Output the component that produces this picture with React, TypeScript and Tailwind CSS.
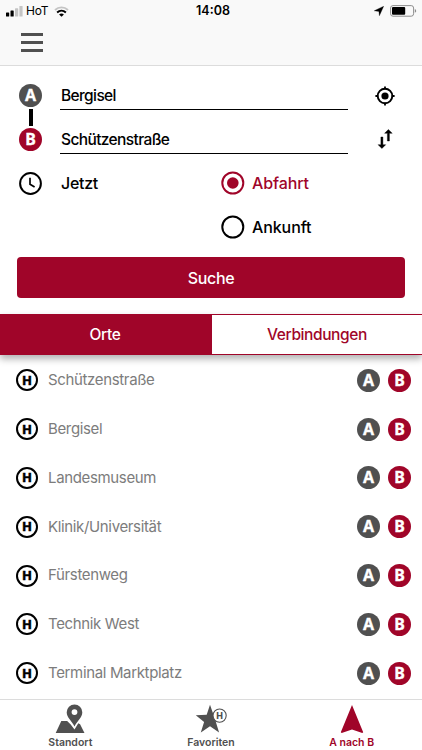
import React, { useState } from 'react';
import clsx from 'clsx';

const stops = [
  'Schützenstraße',
  'Bergisel',
  'Landesmuseum',
  'Klinik/Universität',
  'Fürstenweg',
  'Technik West',
  'Terminal Marktplatz',
];

function Badge({ letter }: { letter: 'A' | 'B' }) {
  return (
    <span
      className={clsx(
        'flex h-[23px] w-[23px] shrink-0 items-center justify-center rounded-full pb-px font-["Noto_Sans",sans-serif] text-[16px] leading-none font-bold text-white [-webkit-text-stroke:0.3px_white]',
        letter === 'A' ? 'bg-[#505050]' : 'bg-[#a00529]'
      )}
    >
      {letter}
    </span>
  );
}

function StopIcon() {
  return (
    <span className="flex h-[22px] w-[22px] shrink-0 items-center justify-center rounded-full border-2 border-black font-['Noto_Sans',sans-serif] text-[13px] leading-none font-bold text-black [-webkit-text-stroke:0.5px_black]">
      H
    </span>
  );
}

function StatusBar() {
  return (
    <div className="flex h-[22px] items-center text-black">
      <div className="flex flex-1 items-center pl-[6px]">
        <svg width="18" height="11" viewBox="0 0 18 11">
          <rect x="0" y="6.5" width="3.2" height="4" rx="0.6" />
          <rect x="4.5" y="4.5" width="3.2" height="6" rx="0.6" />
          <rect x="9" y="2.3" width="3.2" height="8.2" rx="0.6" fill="#c4c4c4" />
          <rect x="13.4" y="0" width="3.2" height="10.5" rx="0.6" fill="#c4c4c4" />
        </svg>
        <span className="ml-[2px] text-[12px] leading-none tracking-[-0.2px]">HoT</span>
        <svg className="ml-[6px]" width="15" height="11" viewBox="0 0 15 11" fill="none">
          <path d="M1 4C4.8.5 10.2.5 14 4" stroke="#c4c4c4" strokeWidth="1.9" />
          <path d="M3.1 6.5c2.6-2.4 6.2-2.4 8.8 0" stroke="#000" strokeWidth="1.9" />
          <path d="M5.1 8.6c1.4-1.4 3.4-1.4 4.8 0l-2.4 2.2z" fill="#000" />
        </svg>
      </div>
      <span className="pl-[3px] text-[12.5px] leading-none font-semibold">14:08</span>
      <div className="flex flex-1 items-center justify-end pr-[5px]">
        <svg width="10" height="10" viewBox="0 0 10 10">
          <path d="M9.7.2 5.4 9.8 4.9 5.4.2 4.8z" stroke="#000" strokeWidth="0.3" />
        </svg>
        <svg className="ml-[6px]" width="27" height="12" viewBox="0 0 27 12">
          <rect x="0.6" y="0.6" width="23" height="10.6" rx="2.4" fill="none" stroke="#8e8e8e" />
          <rect x="2" y="2" width="13.2" height="7.8" rx="1" />
          <path d="M24.8 4v3.8c1.9-.5 1.9-3.3 0-3.8z" fill="#8e8e8e" />
        </svg>
      </div>
    </div>
  );
}

function SearchForm() {
  return (
    <form className="px-[17px] pt-[8px]" onSubmit={(e) => e.preventDefault()}>
      <div className="flex">
        <div className="flex w-[27px] flex-col items-center pt-[10px]">
          <Badge letter="A" />
          <span className="my-[2px] h-[17px] w-[4px] bg-black" />
          <Badge letter="B" />
        </div>
        <div className="ml-[16px] flex w-[288px] flex-col text-[15.5px] leading-[22px] font-medium tracking-[-0.62px] text-black">
          <div className="mt-[11px] h-[25px] border-b border-black pl-px">Bergisel</div>
          <div className="mt-[19px] h-[25px] border-b border-black pl-px">Schützenstraße</div>
        </div>
        <div className="ml-auto flex w-[41px] flex-col items-center pt-[11px]">
          <svg width="22" height="22" viewBox="0 0 22 22" fill="none" stroke="#000">
            <circle cx="11" cy="11" r="7.3" strokeWidth="1.9" />
            <circle cx="11" cy="11" r="3.6" fill="#000" stroke="none" />
            <path d="M11 1.4v2.8M11 17.8v2.8M1.4 11h2.8M17.8 11h2.8" strokeWidth="1.8" />
          </svg>
          <svg className="mt-[21px]" width="22" height="22" viewBox="0 0 22 22">
            <path d="M13.4 13V5.3h-2.8L14.4 1.5l3.8 3.8h-2.8V13zM6.9 9v7.7H4.1l3.8 3.8 3.8-3.8H8.9V9z" stroke="#000" strokeWidth="0.4" />
          </svg>
        </div>
      </div>
      <div className="mt-[7px] flex text-[16px] leading-[22px] font-medium text-black">
        <div className="flex h-[44px] w-[203px] items-center pl-[2px]">
          <svg width="23" height="23" viewBox="0 0 23 23" fill="none" stroke="#000">
            <circle cx="11.5" cy="11.5" r="10.4" strokeWidth="2" />
            <path d="M11 5.7v6.6l4.6 2.7" strokeWidth="1.7" />
          </svg>
          <span className="ml-[19px] tracking-[-0.3px]">Jetzt</span>
        </div>
        <div className="flex flex-col tracking-[-0.1px]">
          <label className="flex h-[44px] items-center text-[#a00529]">
            <svg width="25" height="24" viewBox="0 0 25 24" fill="none" stroke="currentColor">
              <circle cx="12.8" cy="12" r="10.5" strokeWidth="2" />
              <circle cx="12.8" cy="12" r="5.8" fill="currentColor" stroke="none" />
            </svg>
            <span className="ml-[7px]">Abfahrt</span>
          </label>
          <label className="flex h-[43px] items-center">
            <svg width="25" height="24" viewBox="0 0 25 24" fill="none" stroke="currentColor">
              <circle cx="12.8" cy="12" r="10.5" strokeWidth="2" />
            </svg>
            <span className="ml-[7px]">Ankunft</span>
          </label>
        </div>
      </div>
      <button className="mt-[9px] h-[41px] w-full rounded-[4px] bg-[#a00529] text-[16px] font-medium tracking-[-0.3px] text-white">
        Suche
      </button>
    </form>
  );
}

function BottomNav() {
  return (
    <nav className="flex h-[51px] shrink-0 border-t border-[#dcdcdc] bg-white text-[10.5px] leading-[14px] font-semibold text-[#505050]">
      <a className="flex flex-1 flex-col items-center pt-[4px]">
        <svg width="30" height="30" viewBox="0 0 30 30" fill="currentColor">
          <path fillRule="evenodd" d="M19.5.4a7.8 7.8 0 0 0-7.8 7.8c0 5.4 5.3 8.8 7.8 14.2 2.5-5.4 7.8-8.8 7.8-14.2A7.8 7.8 0 0 0 19.5.4zm0 4.8a2.9 2.9 0 1 1 0 5.8 2.9 2.9 0 0 1 0-5.8z" />
          <path d="M6.3 17h5.8l3.4 3.2 4 5.4 3.8-6.4 1.8 1L29.5 29H.7z" />
        </svg>
        <span className="mt-[2px]">Standort</span>
      </a>
      <a className="flex flex-1 flex-col items-center pt-[4px]">
        <svg width="32" height="30" viewBox="0 0 32 30" fill="currentColor">
          <path d="m15 .8 3.5 10 10.6.2-8.4 6.4 3.4 11.2-9.1-6.3-9.2 6.3 3.3-10.7L.8 11.2l10.9-.4z" />
          <circle cx="24.6" cy="11.6" r="6.6" fill="#fff" stroke="currentColor" strokeWidth="1.1" />
          <text x="24.6" y="15" textAnchor="middle" fontSize="9.5" fontWeight="800" fontFamily="Roboto, sans-serif">H</text>
        </svg>
        <span className="mt-[2px]">Favoriten</span>
      </a>
      <a className="flex flex-1 flex-col items-center pt-[4px] text-[#a00529]">
        <svg width="24" height="30" viewBox="0 0 24 30" fill="currentColor">
          <path d="M12 1 23.2 28.2 22.3 29.1 12 25.4 1.7 29.1.8 28.2z" />
        </svg>
        <span className="mt-[2px]">A nach B</span>
      </a>
    </nav>
  );
}

export default function App() {
  const [tab, setTab] = useState('orte');

  return (
    <div className="flex h-[750px] w-[422px] flex-col overflow-hidden bg-white font-[Inter,sans-serif]">
      <header className="h-[66px] shrink-0 border-b border-[#dcdcdc] bg-[#f9f9f9]">
        <StatusBar />
        <button className="mt-[11px] ml-[21px] flex flex-col gap-[5px]" aria-label="Menü">
          <span className="h-[3px] w-[22px] bg-[#505050]" />
          <span className="h-[3px] w-[22px] bg-[#505050]" />
          <span className="h-[3px] w-[22px] bg-[#505050]" />
        </button>
      </header>

      <SearchForm />

      <div className="relative mt-[16px] flex h-[41px] shrink-0 border-y border-[#a00529] text-[15.5px] font-medium tracking-[-0.4px] shadow-[0_4px_7px_rgba(0,0,0,0.3)]">
        <button
          onClick={() => setTab('orte')}
          className={clsx('w-[212px] pr-[2px]', tab === 'orte' ? 'bg-[#a00529] text-white' : 'bg-white text-[#a00529]')}
        >
          Orte
        </button>
        <button
          onClick={() => setTab('verbindungen')}
          className={clsx('flex-1', tab === 'verbindungen' ? 'bg-[#a00529] text-white' : 'bg-white text-[#a00529]')}
        >
          Verbindungen
        </button>
      </div>

      <ul className="flex min-h-0 flex-1 flex-col pt-[1px]">
        {stops.map((stop) => (
          <li key={stop} className="flex h-[48.8px] shrink-0 items-center pr-[11px] pl-[16px]">
            <StopIcon />
            <span className="ml-[10px] text-[15px] tracking-[-0.35px] text-[#7c7c7c]">{stop}</span>
            <span className="ml-auto flex gap-[8px]">
              <Badge letter="A" />
              <Badge letter="B" />
            </span>
          </li>
        ))}
      </ul>

      <BottomNav />
    </div>
  );
}
